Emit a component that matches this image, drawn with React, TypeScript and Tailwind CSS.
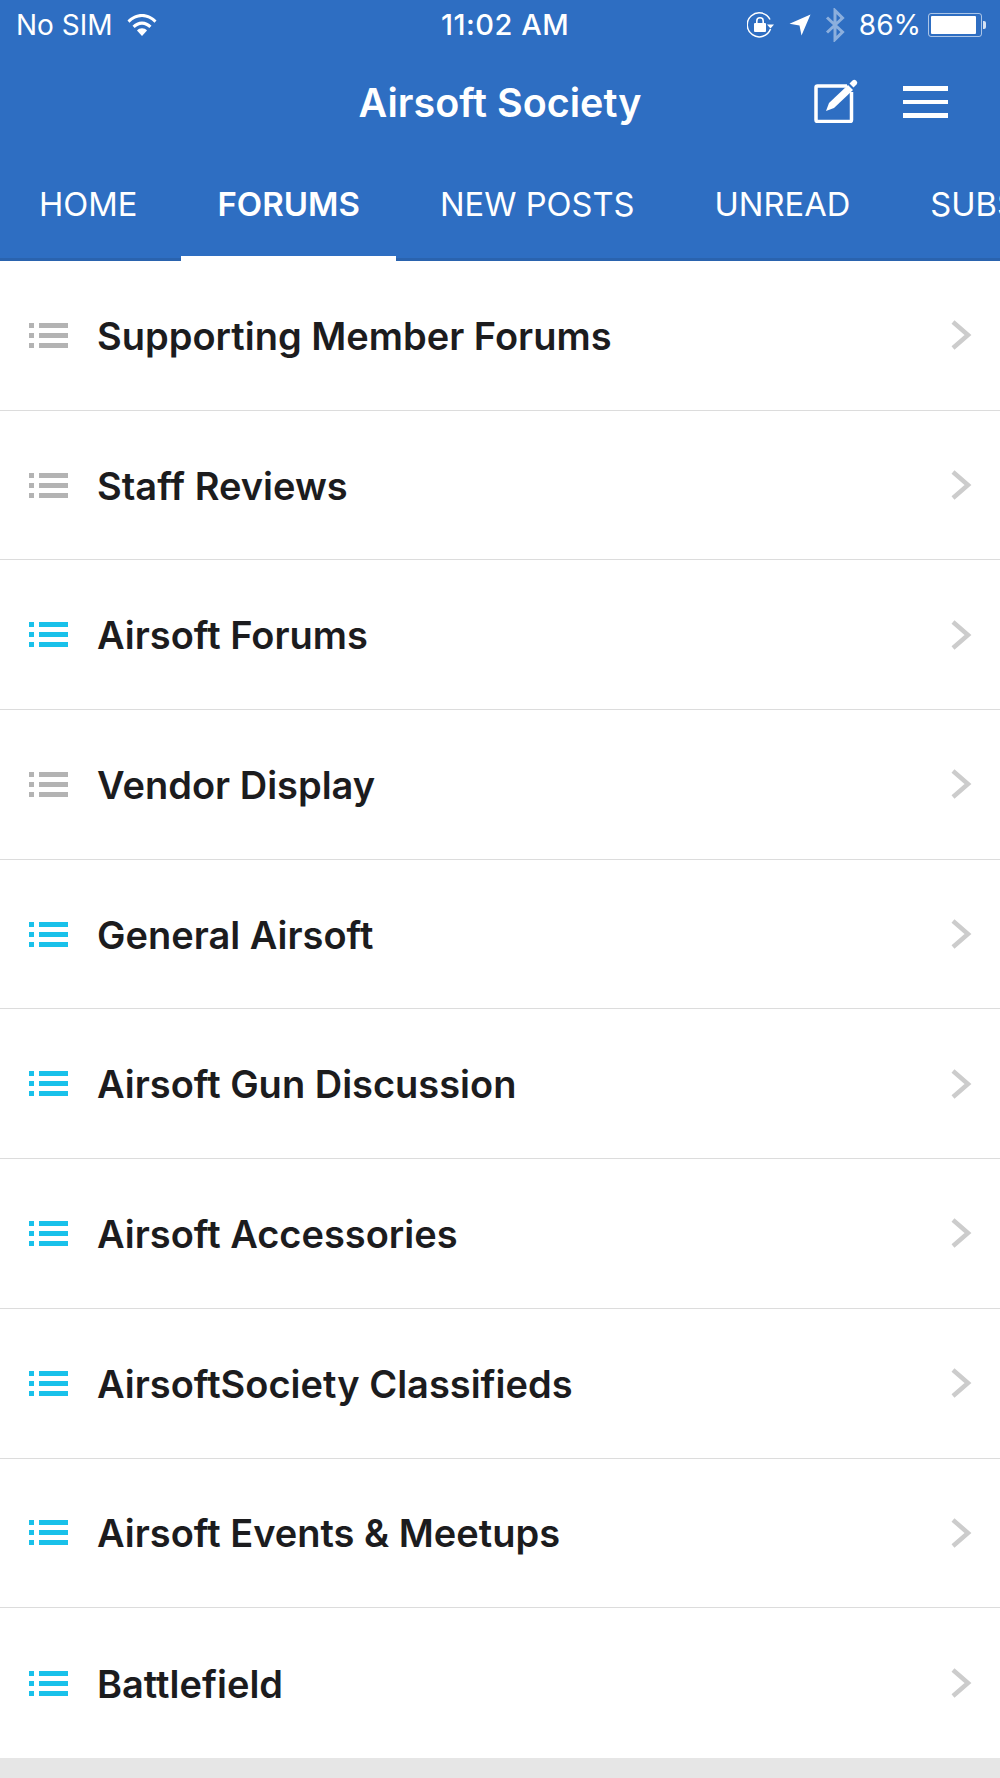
const forums = [
  { title: "Supporting Member Forums", active: false },
  { title: "Staff Reviews", active: false },
  { title: "Airsoft Forums", active: true },
  { title: "Vendor Display", active: false },
  { title: "General Airsoft", active: true },
  { title: "Airsoft Gun Discussion", active: true },
  { title: "Airsoft Accessories", active: true },
  { title: "AirsoftSociety Classifieds", active: true },
  { title: "Airsoft Events & Meetups", active: true },
  { title: "Battlefield", active: true },
];

const tabs = ["HOME", "FORUMS", "NEW POSTS", "UNREAD", "SUBSCRIPTIONS"];

const WifiIcon = () => (
  <svg width="30" height="24" viewBox="0 0 30 24" fill="white">
    <path d="M0.500 7.500C4.500 3.500 9.500 1 15 1s10.500 2.500 14.500 6.500l-2 2.200C24 6.300 19.800 4 15 4S6 6.300 2.500 9.700z" />
    <path d="M5.500 12.700C8 10.200 11.300 8.500 15 8.500s7 1.700 9.500 4.200l-2.200 2.300C20.300 13 17.800 11.700 15 11.700s-5.300 1.300-7.300 3.300z" />
    <path d="M10 17.500c1.300-1.300 3-2.200 5-2.200s3.700.9 5 2.200L15 23z" />
  </svg>
);

const RotationLockIcon = () => (
  <svg width="28" height="26" viewBox="0 0 28 26" fill="none">
    <path d="M23 7.500A12 12 0 1 0 23.500 17" stroke="white" strokeWidth="1.500" />
    <path d="M20 12.500h7l-3.500 4z" fill="white" />
    <rect x="7" y="11" width="12" height="9" rx="1" fill="white" />
    <path d="M9.800 11V9a3.200 3.200 0 0 1 6.400 0v2" stroke="white" strokeWidth="1.600" />
  </svg>
);

const LocationIcon = () => (
  <svg width="22" height="22" viewBox="0 0 22 22" fill="white">
    <path d="M21.500 0.500 12.500 21.500 10.500 11.500 0.500 9.800z" />
  </svg>
);

const BluetoothIcon = () => (
  <svg width="20" height="34" viewBox="0 0 20 34" fill="none" stroke="white" strokeOpacity="0.45" strokeWidth="3">
    <path d="M2 9.500 17.500 24 10 31.500V2.500L17.500 10 2 24.500" />
  </svg>
);

const Battery = () => (
  <div className="flex items-center">
    <div className="w-[54px] h-[24px] rounded-[3px] border border-white/60 p-[2px]">
      <div className="w-[45px] h-full bg-white rounded-[1px]" />
    </div>
    <div className="w-[3px] h-[8px] ml-[1px] bg-white/80 rounded-r-[2px]" />
  </div>
);

const ComposeIcon = () => (
  <svg width="46" height="46" viewBox="0 0 46 46" fill="none">
    <path d="M33 9H3.500a1.500 1.500 0 0 0-1.500 1.500V43a1.500 1.500 0 0 0 1.500 1.500H36a1.500 1.500 0 0 0 1.500-1.500V15" stroke="white" strokeWidth="3.500" />
    <path d="M12 34l3-8L34 8l5 5L20 31z" fill="white" />
    <path d="M35.500 6.500l3-3a2.500 2.500 0 0 1 3.500 0l.5.5a2.500 2.500 0 0 1 0 3.500l-3 3z" fill="white" />
  </svg>
);

const ListIcon = ({ active }: { active: boolean }) => (
  <div className={`flex flex-col gap-[5px] w-[39px] shrink-0 ${active ? "text-[#19c1ea]" : "text-[#b3b3b3]"}`}>
    {[0, 1, 2].map((i) => (
      <div key={i} className="flex gap-[5px] h-[5px]">
        <div className="w-[5px] bg-current" />
        <div className="flex-1 bg-current" />
      </div>
    ))}
  </div>
);

const Chevron = () => (
  <svg width="22" height="32" viewBox="0 0 22 32" fill="none" className="shrink-0">
    <path d="M3 3l15 13L3 29" stroke="#cccccc" strokeWidth="4.500" />
  </svg>
);

export default function App() {
  return (
    <div className="w-[1000px] h-[1778px] overflow-hidden bg-[#e6e6e6] font-['Inter',sans-serif]">
      <header className="bg-[#2e6ec2] h-[261px] text-white flex flex-col">
        <div className="flex items-center justify-between relative h-[50px] pl-[16px] pr-[14px]">
          <div className="flex items-center gap-[14px]">
            <span className="text-[28px]">No SIM</span>
            <WifiIcon />
          </div>
          <div className="absolute left-[441px] text-[29px] tracking-[0.5px] font-medium">11:02 AM</div>
          <div className="flex items-center text-[28px]">
            <RotationLockIcon />
            <div className="ml-[14px]">
              <LocationIcon />
            </div>
            <div className="ml-[14px]">
              <BluetoothIcon />
            </div>
            <span className="ml-[14px]">86%</span>
            <div className="ml-[7px]">
              <Battery />
            </div>
          </div>
        </div>
        <div className="relative flex items-center justify-center h-[104px]">
          <h1 className="pt-[3px] text-[39.500px] font-semibold">Airsoft Society</h1>
          <div className="absolute right-[52px] top-[27px] flex items-center gap-[43px]">
            <ComposeIcon />
            <div className="mt-[4px] flex flex-col gap-[9px] w-[45px]">
              <div className="h-[4.500px] bg-white" />
              <div className="h-[4.500px] bg-white" />
              <div className="h-[4.500px] bg-white" />
            </div>
          </div>
        </div>
        <nav className="h-[107px] flex gap-[8px] pl-[3px] overflow-hidden text-[32.700px] shadow-[inset_0_-3px_0_#2a63ae]">
          {tabs.map((tab) => (
            <div
              key={tab}
              className={`shrink-0 px-[36px] flex items-center h-full border-b-[5px] ${
                tab === "FORUMS" ? "border-white font-semibold text-[33px]" : "border-transparent"
              }`}
            >
              {tab}
            </div>
          ))}
        </nav>
      </header>
      <ul>
        {forums.map((forum) => (
          <li
            key={forum.title}
            className="h-[149.7px] bg-white border-b border-[#dcdcdc] last:border-b-0 flex items-center pl-[29px] pr-[28px]"
          >
            <ListIcon active={forum.active} />
            <span className="ml-[29px] pt-[2px] flex-1 text-[38px] font-semibold text-[#1c1c1e]">{forum.title}</span>
            <Chevron />
          </li>
        ))}
      </ul>
    </div>
  );
}
